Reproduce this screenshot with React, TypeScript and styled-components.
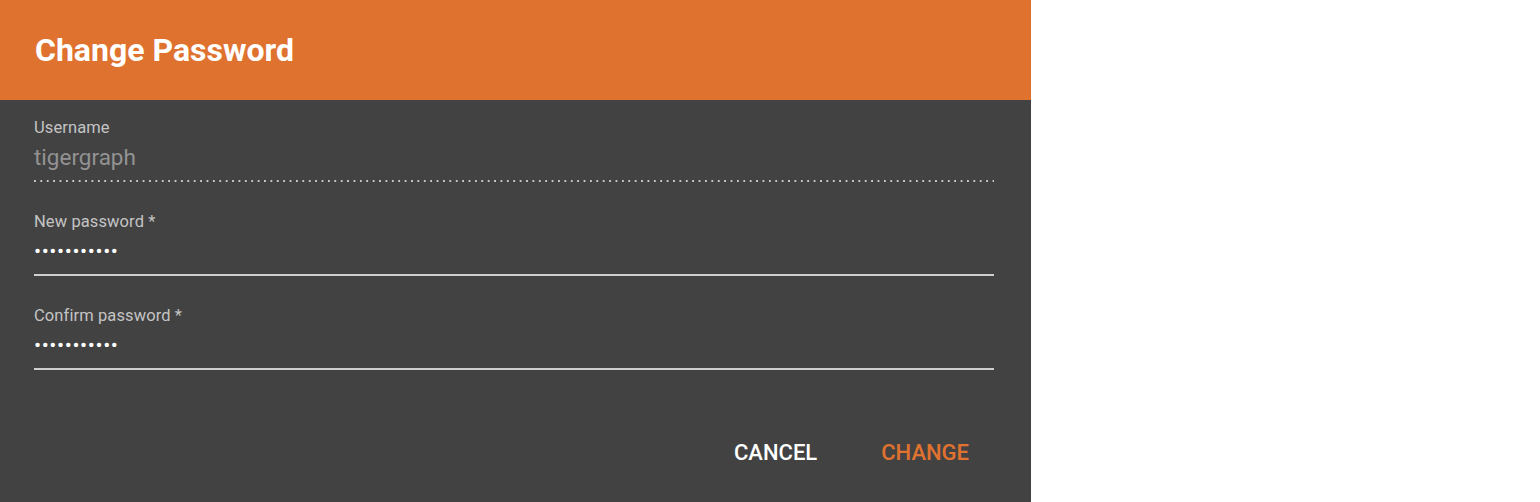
import React from 'react';
import styled, {createGlobalStyle} from 'styled-components';

const GlobalStyle = createGlobalStyle`
  html, body {
    margin: 0;
    padding: 0;
    background: #ffffff;
    font-family: Roboto, 'Liberation Sans', sans-serif;
  }
`

interface FieldProp {
    label: string;
    value: string;
    disabled?: boolean;
}

const Field = ({label, value, disabled}: FieldProp) => {
    return (
        <FieldWrapper>
            <FieldLabel>{label}</FieldLabel>
            <FieldInput $disabled={disabled}>{value}</FieldInput>
            <Underline $disabled={disabled}/>
        </FieldWrapper>
    );
};

const App = () => {
    return (
        <>
            <GlobalStyle/>
            <Dialog>
                <Header>
                    <Title>Change Password</Title>
                </Header>
                <Body>
                    <Field label="Username" value="tigergraph" disabled/>
                    <Field label="New password *" value="•••••••••••"/>
                    <Field label="Confirm password *" value="•••••••••••"/>
                </Body>
                <Actions>
                    <ActionButton>Cancel</ActionButton>
                    <ActionButton $primary>Change</ActionButton>
                </Actions>
            </Dialog>
        </>
    );
};

export default App;

const Dialog = styled.div`
  width: 1031px;
  height: 502px;
  background: #424242;
  display: flex;
  flex-direction: column;
`

const Header = styled.div`
  height: 100px;
  background: #e07230;
  display: flex;
  align-items: center;
  padding-left: 35px;
  box-sizing: border-box;
`

const Title = styled.h1`
  margin: 0;
  color: #ffffff;
  font-size: 32px;
  font-weight: 700;
  line-height: 1;
`

const Body = styled.div`
  padding: 16px 37px 0 34px;
  display: flex;
  flex-direction: column;
`

const FieldWrapper = styled.div`
  height: 94px;
  display: grid;
  grid-template-rows: 23px 41px 2px;
`

const FieldLabel = styled.label`
  color: #c4c4c4;
  font-size: 16.5px;
  letter-spacing: 0.1px;
  line-height: 23px;
`

const FieldInput = styled.div<{ $disabled?: boolean }>`
  box-sizing: border-box;
  padding-top: ${p => p.$disabled ? '3px' : '3px'};
  color: ${p => p.$disabled ? '#939393' : '#ffffff'};
  font-size: ${p => p.$disabled ? '22.5px' : '21px'};
  line-height: 30px;
  letter-spacing: ${p => p.$disabled ? '0' : '0.6px'};
`

const Underline = styled.div<{ $disabled?: boolean }>`
  height: 2px;
  background: ${p => p.$disabled
    ? 'linear-gradient(to right, #c8c8c8 0, #c8c8c8 2px, transparent 2px) 0 0 / 6.4px 2px repeat-x'
    : '#cfcfcf'};
`

const Actions = styled.div`
  display: flex;
  justify-content: flex-end;
  gap: 64px;
  padding: 42px 62px 0 0;
`

const ActionButton = styled.button<{ $primary?: boolean }>`
  background: none;
  border: none;
  padding: 0;
  font-family: Roboto, 'Liberation Sans', sans-serif;
  font-size: 22px;
  font-weight: 500;
  text-transform: uppercase;
  color: ${p => p.$primary ? '#e07230' : '#ffffff'};
  cursor: pointer;
`
